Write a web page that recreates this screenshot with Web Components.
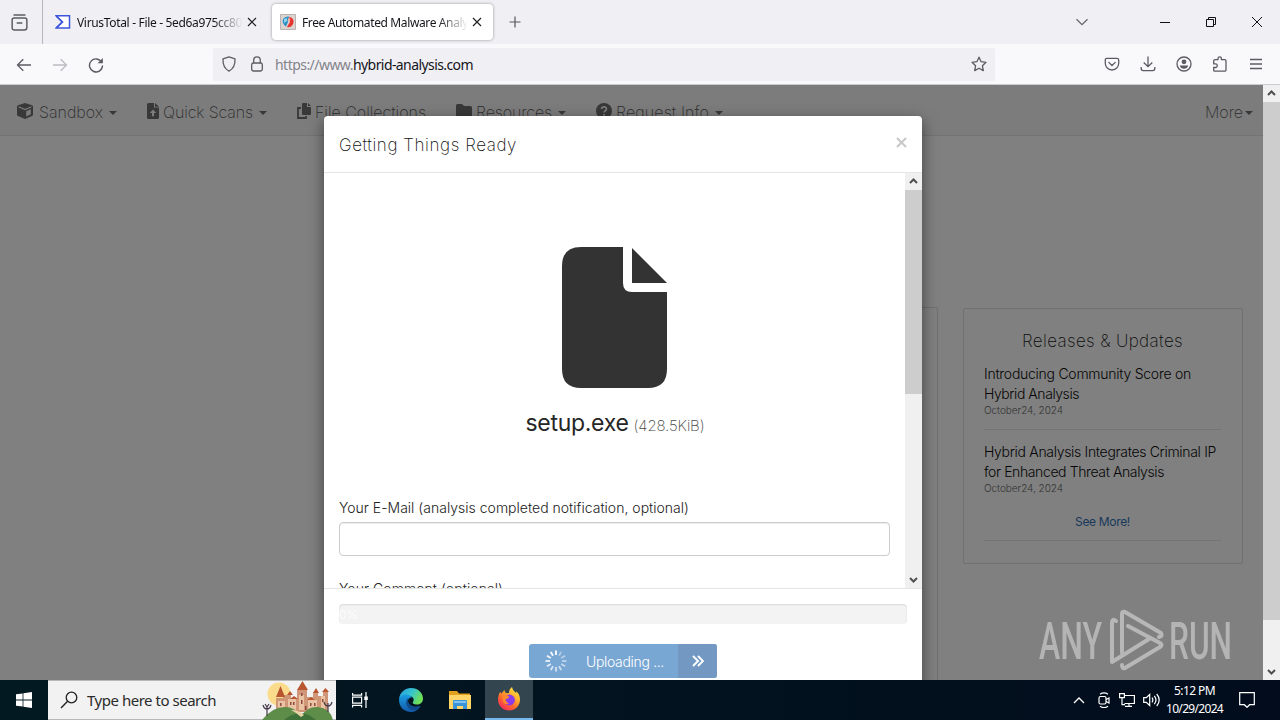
<!DOCTYPE html>
<html lang="en">
<head>
<meta charset="utf-8">
<title>Free Automated Malware Analysis Service</title>
<style>
    html, body { margin: 0; height: 100%; overflow: hidden; }
</style>
</head>
<body>
<app-desktop></app-desktop>

<script>
const ICONS = {
    recent: [20, 20, '<g fill="none" stroke="#5b5b63" stroke-width="1.4"><path d="M4.8 2.8h10.4" stroke-linecap="round"/><path d="M3 7.6Q3 5.8 5 5.8h10q2 0 2 1.8v7.2q0 2.4-2.4 2.4H5.4Q3 17.200 3 14.800z"/><path d="M7.800 10.500h4.400" stroke-linecap="round"/></g>'],
    vt: [16, 16, '<path d="M1.200 1.700h13.300v12.400H1.200l6.300-6.200z" fill="#fff" stroke="#3c55dc" stroke-width="1.500"/><path d="M1 2l6.300 6L1 14" fill="none" stroke="#3c55dc" stroke-width="1.500"/>'],
    hybrid: [16, 16, '<path fill="#dcd3d1" stroke="#b9b3b3" d="M.5.5h15v15H.5z"/><path fill="#2f8fc4" d="M3 5q2-3 6-2.500L8 8l-2 4.500Q1.500 10 3 5z"/><path fill="#e7332c" d="M9 3c4 0 5.500 4 4 7-1 2.500-4 4-6 3l3-5z"/><path fill="#8cd3ee" d="M4 5l3-1v3L4 9z"/><path fill="#f3b2a5" d="M8.500 4l2 1-1 3-2-1z"/>'],
    x: [16, 16, '<path d="M4 4l8 8M12 4l-8 8" stroke="#222" stroke-width="1.200" fill="none"/>'],
    plus: [16, 16, '<path d="M8 2.500v11M2.500 8h11" stroke="#55555c" stroke-width="1.200"/>'],
    chevron: [16, 16, '<path d="M2.500 5.200L8 10.700l5.500-5.500" fill="none" stroke="#66666d" stroke-width="1.300"/>'],
    min: [12, 12, '<path d="M1 6.500h10" stroke="#111" fill="none"/>'],
    restore: [12, 12, '<path d="M1.500 3.500h7v7h-7zM3.500 3.500v-2h7v7h-2" stroke="#111" fill="none"/>'],
    close: [12, 12, '<path d="M1 1l10 10M11 1L1 11" stroke="#111" fill="none"/>'],
    back: [16, 16, '<path d="M15 8H1.700M7.300 2.200L1.500 8l5.800 5.800" stroke="#5b5b63" stroke-width="1.300" fill="none"/>'],
    forward: [16, 16, '<path d="M1 8h13.300M8.700 2.200L14.500 8l-5.800 5.800" stroke="#bbbbc1" stroke-width="1.300" fill="none"/>'],
    reload: [16, 16, '<path d="M13.700 5.300A6.500 6.500 0 1 0 14.500 8.500" stroke="#5b5b63" stroke-width="1.400" fill="none"/><path d="M14.900 1v5.300H9.600z" fill="#5b5b63"/>'],
    shield: [16, 16, '<path d="M8 .9l6 2c.3 5.500-1.200 9.700-6 12.200C3.200 12.600 1.700 8.400 2 2.900z" stroke="#5b5b63" stroke-width="1.300" fill="none" stroke-linejoin="round"/>'],
    lock: [16, 16, '<rect x="2.700" y="7" width="10.600" height="8" rx="1.800" stroke="#5b5b63" stroke-width="1.300" fill="none"/><path d="M4.700 7V4.200a3.300 3.300 0 0 1 6.600 0V7" stroke="#5b5b63" stroke-width="1.300" fill="none"/>'],
    star: [16, 16, '<path d="M8 1.200l2.100 4.500 4.900.6-3.600 3.400.9 4.900L8 12.200l-4.300 2.400.9-4.900L1 6.300l4.900-.6z" stroke="#5b5b63" stroke-width="1.300" fill="none" stroke-linejoin="round"/>'],
    pocket: [16, 16, '<path d="M3 2.300h10q1.700 0 1.700 1.700v3.300a6.700 6.700 0 0 1-13.400 0V4Q1.300 2.300 3 2.300zM4.800 6.400L8 9.500l3.200-3.100" stroke="#5b5b63" stroke-width="1.300" fill="none" stroke-linecap="round"/>'],
    download: [16, 16, '<path d="M8 .5v10M3.700 6.500L8 10.700l4.300-4.200M1.200 11v1.600q0 2 2 2h9.600q2 0 2-2V11" stroke="#5b5b63" stroke-width="1.300" fill="none"/>'],
    account: [16, 16, '<circle cx="8" cy="8" r="7" stroke="#5b5b63" stroke-width="1.300" fill="none"/><circle cx="8" cy="5.800" r="2.400" fill="#5b5b63"/><path d="M3.800 9.500h8.400c-.3 2-2 3.300-4.200 3.300s-3.900-1.300-4.200-3.300z" fill="#5b5b63"/>'],
    puzzle: [16, 16, '<path d="M1.700 5q0-1.300 1.300-1.300h3V2.500a1.700 1.700 0 0 1 3.400 0v1.200h3.300Q14 3.700 14 5v9q0 1.200-1.300 1.200H3q-1.300 0-1.300-1.200v-2.500H3.500a1.800 1.800 0 0 0 0-3.600H1.700z" stroke="#5b5b63" stroke-width="1.300" fill="none" stroke-linejoin="round"/>'],
    menu: [16, 16, '<path d="M2 3.500h12M2 8h12M2 12.500h12" stroke="#5b5b63" stroke-width="1.300"/>'],
    cube: [16, 16, '<path fill="#383838" d="M8 0l7 2.200q1 .4 1 1.300v8.200q0 1-1 1.400L8 16l-7-2.900q-1-.4-1-1.400V3.500q0-.9 1-1.300z"/><path d="M1.500 3.800L8 6.500l6.500-2.700" stroke="#7c7c7c" stroke-width="1.200" fill="none"/><path d="M9.200 8.200l4.600-2v5l-4.600 2.300z" fill="#7c7c7c"/>'],
    upload: [12, 16, '<path fill="#383838" d="M1.500 0H7v4.500h5v10q0 1.500-1.500 1.500h-9Q0 16 0 14.500v-13Q0 0 1.500 0zM8 0l4 3.700H8z"/><path fill="#7c7c7c" d="M6 6.500l3.200 3.500H7v3.300H5V10H2.800z"/>'],
    copy: [14, 16, '<path fill="#383838" d="M6 0h4v4h4v7q0 1-1 1H6q-1 0-1-1V1q0-1 1-1zM11 0l3 3h-3z"/><path fill="none" stroke="#383838" stroke-width="1.800" d="M4 5H1v10h8v-2"/>'],
    folder: [16, 14, '<path fill="#383838" d="M1.500 0H6l2 2h6.500Q16 2 16 3.500v9q0 1.500-1.500 1.500h-13Q0 14 0 12.500v-11Q0 0 1.500 0z"/>'],
    question: [16, 16, '<circle cx="8" cy="8" r="8" fill="#383838"/><path d="M5.500 6q.3-2.200 2.500-2.200T10.500 6c0 1.700-2.400 1.700-2.400 3.400M8.100 11v1.800" fill="none" stroke="#7c7c7c" stroke-width="1.700"/>'],
    caret: [8, 4, '<path fill="#383838" d="M0 0h8L4 4z"/>'],
    up: [9, 6, '<path d="M1 5l3.500-3.500L8 5" fill="none" stroke="#505050" stroke-width="2"/>'],
    down: [9, 6, '<path d="M1 1l3.500 3.500L8 1" fill="none" stroke="#505050" stroke-width="2"/>'],
    times: [11, 11, '<path d="M1 1l9 9M10 1l-9 9" stroke="#c8c8c8" stroke-width="2.100"/>'],
    file: [105, 141, '<path fill="#333" d="M19 0h42v36q0 9 9 9h35v77q0 19-19 19H19Q0 141 0 122V19Q0 0 19 0zM70 1l35 35H70z"/>'],
    raquo: [12, 12, '<path d="M1 1l5 5-5 5M6 1l5 5-5 5" fill="none" stroke="#fff" stroke-width="1.900"/>'],
    windows: [16, 16, '<path fill="#fff" d="M0 2.300l6.600-.9v6.200H0zM7.400 1.300L16 0v7.600H7.400zM0 8.400h6.600v6.200L0 13.700zM7.400 8.400H16V16l-8.600-1.200z"/>'],
    search: [18, 18, '<circle cx="11.500" cy="6.500" r="5.300" fill="none" stroke="#222" stroke-width="1.300"/><path d="M7.600 10.300L1 17" stroke="#222" stroke-width="1.400"/>'],
    taskview: [18, 16, '<g fill="none" stroke="#fff" stroke-width="1.200"><path d="M1.600 1v2.200h9V1M1.600 15.500v-2.200h9v2.200M1.600 5.200h9v6h-9zM15 0v16"/></g><path fill="#fff" d="M13.300 4.500h3.500V8h-3.500z"/>'],
    edge: [24, 24, '<defs><linearGradient id="a" x1="0" y1="0" x2="1" y2=".4"><stop stop-color="#249bdf"/><stop offset=".55" stop-color="#36c4d0"/><stop offset="1" stop-color="#6ddf58"/></linearGradient><linearGradient id="b" x2="0" y2="1"><stop stop-color="#1b9de2"/><stop offset="1" stop-color="#1459a8"/></linearGradient></defs><path fill="url(#a)" d="M0 11C1 4 6 0 12 0c7 0 12 5 12 10.500 0 4-3 6-6 6s-5-1-4-2.500c2-3-.5-6-4-6C5 8 1 9 0 11z"/><path fill="url(#b)" d="M0 12c0-3 3-5.500 7-5.500 3 0 5.500 1.500 6 3-2-.5-4 1-4 3.500 0 4 5 7.500 12.500 5C19 22 16 24 12 24 5 24 0 19 0 12z"/><path fill="#114a8b" d="M9 10c-2 2-2.500 5-1 8 2 4 7 5 10 3.500 1.500-.8 3-2 3.500-3.500-6 2-12 0-12.500-5 0-1 0-2 0-3z"/>'],
    explorer: [22, 18, '<path fill="#e3a21d" d="M0 0h8l2 2.500h11V16H0z"/><path fill="#ffd667" d="M0 4h22v14H0z"/><path fill="#3b94d9" d="M4 10q0-1 1-1h12q1 0 1 1v8h-4v-3H8v3H4z"/><path fill="#80c4f2" d="M5 10h12v2H5z"/>'],
    firefox: [24, 24, '<defs><linearGradient id="f" x1=".9" y1="0" x2=".2" y2="1"><stop stop-color="#fff04a"/><stop offset=".35" stop-color="#ffb52c"/><stop offset=".65" stop-color="#ff6a2d"/><stop offset="1" stop-color="#f4245e"/></linearGradient></defs><path fill="url(#f)" d="M3 5l1.800 1.600Q6 4 7.500 3q0 2.300 2 3.300L12 6q0-4 3-6 .5 3 3 5l1.600 1.300L19 4q4 3.500 4 8.500C23 19 18 23.500 12 23.500S1 19 1 12.500C1 9 2 7 3 5z"/><circle cx="12.500" cy="13" r="5.400" fill="#8b3bea"/><path fill="#ff8a2d" d="M5.500 8.500q4-1.500 7 1.500-1.500 2-4 2 .5 3.500 3.500 4.500-4 1.500-6-1.500z"/>'],
    tray: [12, 7, '<path d="M1 6l5-5 5 5" fill="none" stroke="#fff" stroke-width="1.300"/>'],
    meet: [12, 16, '<g fill="none" stroke="#fff" stroke-width="1.200"><rect x="1" y="4.500" width="7" height="7.500" rx="1.500"/><path d="M8 7.500l3-1.500v5l-3-1.500M2 2.200Q6-.4 10 2.200M2 14.300q4 2.600 8 0"/></g>'],
    net: [16, 14, '<path fill="none" stroke="#fff" stroke-width="1.200" d="M5 2.500h10.400v8H5.500M10 10.500v3M6 13.400h7M.6.6h4.800v4H.6zM3 4.600v7h3"/>'],
    volume: [17, 14, '<g fill="none" stroke="#fff" stroke-width="1.200"><path d="M.7 4.700h2.600L6.700 1.500v11L3.300 9.300H.7z"/><path d="M9 4.700q1.700 2.300 0 4.600M11.300 2.800q3.400 4.200 0 8.400M13.700 1q5 6 0 12"/></g>'],
    note: [16, 16, '<path fill="none" stroke="#fff" stroke-width="1.200" d="M.7.700h14.600v12h-4.600L8 15.300l-2.700-2.600H.7z"/>']
};

class UiIcon extends HTMLElement {
    connectedCallback() {
        const [w, h, body] = ICONS[this.getAttribute('name')];
        const width = this.getAttribute('size') || w;
        this.attachShadow({ mode: 'open' }).innerHTML = `
            <style>
                :host { display: block; flex: none; line-height: 0; }
                svg { display: block; }
            </style>
            <svg width="${width}" height="${width * h / w}" viewBox="0 0 ${w} ${h}">${body}</svg>
        `;
    }
}

// One line of text, tracked so that it fills the width given in `w`
class FitText extends HTMLElement {
    connectedCallback() {
        this.attachShadow({ mode: 'open' }).innerHTML = `
            <style>
                :host { display: block; flex: none; width: max-content; white-space: nowrap; }
            </style>
            <slot></slot>
        `;
        const target = Number(this.getAttribute('w'));
        const natural = this.getBoundingClientRect().width;
        this.style.letterSpacing = (target - natural) / this.textContent.length + 'px';
    }
}

class BrowserTab extends HTMLElement {
    connectedCallback() {
        this.attachShadow({ mode: 'open' }).innerHTML = `
            <style>
                :host { display: flex; align-items: center; box-sizing: border-box; width: 221px; height: 36px; padding: 0 8px; border-radius: 4px; }
                :host([active]) { background: #fff; box-shadow: 0 0 3px rgba(0, 0, 0, .4); }
                .title { width: 166px; margin: 1px 1px 0 6px; overflow: hidden; -webkit-mask-image: linear-gradient(90deg, #000 82%, transparent); mask-image: linear-gradient(90deg, #000 82%, transparent); }
            </style>
            <ui-icon name="${this.getAttribute('icon')}"></ui-icon>
            <div class="title"><slot></slot></div>
            <ui-icon name="x"></ui-icon>
        `;
    }
}

class TabStrip extends HTMLElement {
    connectedCallback() {
        this.attachShadow({ mode: 'open' }).innerHTML = `
            <style>
                :host { display: flex; align-items: center; height: 44px; background: #f0f0f4; font: 12px/20px "Noto Sans", sans-serif; color: #15141a; }
                .recent { display: flex; align-items: center; box-sizing: border-box; width: 43px; height: 44px; padding-left: 9px; border-right: 1px solid #b5b5ba; }
                browser-tab { margin-left: 4px; }
                .controls { display: flex; align-items: center; margin-left: auto; padding-right: 17px; gap: 34px; }
                .controls ui-icon:first-child { margin-right: 35px; }
            </style>
            <div class="recent"><ui-icon name="recent" size="21"></ui-icon></div>
            <browser-tab icon="vt"><fit-text w="165">VirusTotal - File - 5ed6a975cc80</fit-text></browser-tab>
            <browser-tab icon="hybrid" active><fit-text w="166">Free Automated Malware Analy</fit-text></browser-tab>
            <ui-icon name="plus" style="margin-left: 14px"></ui-icon>
            <div class="controls">
                <ui-icon name="chevron"></ui-icon>
                <ui-icon name="min"></ui-icon>
                <ui-icon name="restore"></ui-icon>
                <ui-icon name="close"></ui-icon>
            </div>
        `;
    }
}

class NavToolbar extends HTMLElement {
    connectedCallback() {
        this.attachShadow({ mode: 'open' }).innerHTML = `
            <style>
                :host { display: flex; align-items: center; box-sizing: border-box; height: 41px; padding-left: 16px; background: #f9f9fb; border-bottom: 1px solid #ccccd0; }
                .nav { display: flex; gap: 20px; padding-top: 1px; }
                .url { display: flex; align-items: center; box-sizing: border-box; width: 782px; height: 33px; margin-left: 109px; padding: 0 8px; border-radius: 2px; background: #f0f0f4; font: 14px/20px "Noto Sans", sans-serif; color: #15141a; }
                .url ui-icon + ui-icon { margin: 0 10px 0 12px; }
                .url fit-text { padding-top: 2px; }
                .scheme { color: #84838a; }
                .url .star { margin-left: auto; }
                .actions { display: flex; gap: 20px; margin-left: 109px; }
            </style>
            <div class="nav">
                <ui-icon name="back"></ui-icon>
                <ui-icon name="forward"></ui-icon>
                <ui-icon name="reload"></ui-icon>
            </div>
            <div class="url">
                <ui-icon name="shield"></ui-icon>
                <ui-icon name="lock"></ui-icon>
                <fit-text w="78" class="scheme">https://www.</fit-text>
                <fit-text w="120">hybrid-analysis.com</fit-text>
                <ui-icon name="star" class="star"></ui-icon>
            </div>
            <div class="actions">
                <ui-icon name="pocket"></ui-icon>
                <ui-icon name="download"></ui-icon>
                <ui-icon name="account"></ui-icon>
                <ui-icon name="puzzle"></ui-icon>
                <ui-icon name="menu"></ui-icon>
            </div>
        `;
    }
}

class ScrollBar extends HTMLElement {
    connectedCallback() {
        this.attachShadow({ mode: 'open' }).innerHTML = `
            <style>
                :host { display: flex; flex-direction: column; align-items: center; flex: none; width: 17px; background: #f0f0f0; }
                .btn { display: flex; align-items: center; justify-content: center; box-sizing: border-box; height: 17px; padding-bottom: 1px; }
                .btn:last-child { padding-bottom: 0; }
                .thumb { width: 17px; height: ${this.getAttribute('thumb')}px; margin-bottom: auto; background: #cdcdcd; }
            </style>
            <div class="btn"><ui-icon name="up"></ui-icon></div>
            <div class="thumb"></div>
            <div class="btn"><ui-icon name="down"></ui-icon></div>
        `;
    }
}

class SiteNav extends HTMLElement {
    connectedCallback() {
        this.attachShadow({ mode: 'open' }).innerHTML = `
            <style>
                :host { display: flex; align-items: center; box-sizing: border-box; height: 51px; padding: 2px 10px 0 17px; background: #7c7c7c; border-bottom: 1px solid #737373; font: 200 16px/24px Inter, sans-serif; color: #2c2c2c; }
                .item { display: flex; align-items: center; margin-right: 30px; }
                .item fit-text { margin-left: 4px; padding-top: 1px; }
                .item ui-icon[name="caret"] { margin: 4px 0 0 6px; }
                .more { margin: 0 0 0 auto; }
                .more ui-icon[name="caret"] { margin-left: 2px; }
            </style>
            <div class="item"><ui-icon name="cube"></ui-icon><fit-text w="64" style="margin-left: 6px">Sandbox</fit-text><ui-icon name="caret"></ui-icon></div>
            <div class="item"><ui-icon name="upload"></ui-icon><fit-text w="90">Quick Scans</fit-text><ui-icon name="caret"></ui-icon></div>
            <div class="item"><ui-icon name="copy"></ui-icon><fit-text w="111">File Collections</fit-text></div>
            <div class="item"><ui-icon name="folder"></ui-icon><fit-text w="76">Resources</fit-text><ui-icon name="caret"></ui-icon></div>
            <div class="item"><ui-icon name="question"></ui-icon><fit-text w="93">Request Info</fit-text><ui-icon name="caret"></ui-icon></div>
            <div class="item more"><fit-text w="38">More</fit-text><ui-icon name="caret"></ui-icon></div>
        `;
    }
}

class NewsItem extends HTMLElement {
    connectedCallback() {
        this.attachShadow({ mode: 'open' }).innerHTML = `
            <style>
                :host { display: block; box-sizing: border-box; height: 70px; padding-top: 4px; margin-bottom: 8px; border-bottom: 1px solid #747474; font: 300 14px/19.5px Inter, sans-serif; color: #060606; }
                .date { font-size: 10px; line-height: 14px; color: #333; }
            </style>
            <slot></slot>
            <fit-text class="date" w="79">October24, 2024</fit-text>
        `;
    }
}

class NewsPanel extends HTMLElement {
    connectedCallback() {
        this.attachShadow({ mode: 'open' }).innerHTML = `
            <style>
                :host { display: flex; flex-direction: column; box-sizing: border-box; width: 280px; height: 256px; padding: 21px 21px 0 20px; border: 1px solid #707070; border-radius: 2px; font-family: Inter, sans-serif; }
                .heading { align-self: center; margin-bottom: 8px; font: 200 17px/22px Inter, sans-serif; color: #0c0c0c; }
                .more { display: flex; justify-content: center; box-sizing: border-box; height: 29px; margin-top: -4px; border-bottom: 1px solid #747474; font: 400 12px/19px Inter, sans-serif; color: #17385a; }
                news-item:nth-of-type(2) { border-color: transparent; }
            </style>
            <fit-text class="heading" w="161">Releases &amp; Updates</fit-text>
            <news-item>
                <fit-text w="207">Introducing Community Score on</fit-text>
                <fit-text w="95">Hybrid Analysis</fit-text>
            </news-item>
            <news-item>
                <fit-text w="232">Hybrid Analysis Integrates Criminal IP</fit-text>
                <fit-text w="180">for Enhanced Threat Analysis</fit-text>
            </news-item>
            <div class="more"><fit-text w="55">See More!</fit-text></div>
        `;
    }
}

class UploadDialog extends HTMLElement {
    connectedCallback() {
        this.attachShadow({ mode: 'open' }).innerHTML = `
            <style>
                :host { display: flex; flex-direction: column; width: 598px; height: 600px; border-radius: 4px; background: #fff; box-shadow: 0 5px 15px rgba(0, 0, 0, .5); font: 400 14px/20px Inter, sans-serif; color: #333; }
                header { display: flex; justify-content: space-between; box-sizing: border-box; height: 57px; padding: 17px 15px 0; border-bottom: 1px solid #e5e5e5; font-size: 17px; font-weight: 200; line-height: 24px; color: #111; }
                header ui-icon { margin-top: 4px; }
                .body { display: flex; height: 415px; }
                .content { display: flex; flex-direction: column; box-sizing: border-box; width: 581px; padding: 74px 15px 0; overflow: hidden; }
                .content > * { flex: none; }
                .content > ui-icon { align-self: center; }
                .name { display: flex; align-items: baseline; justify-content: center; gap: 5px; height: 110px; padding-left: 1px; font-size: 23px; line-height: 70px; color: #262626; }
                .size { font-size: 15px; font-weight: 200; color: #444; }
                label { display: block; font-weight: 300; color: #222; }
                input { box-sizing: border-box; width: 551px; height: 34px; margin: 4px 0 23px; border: 1px solid #ccc; border-radius: 4px; background: #fff; box-shadow: inset 0 1px 1px rgba(0, 0, 0, .075); }
                footer { display: flex; flex-direction: column; align-items: center; padding-top: 15px; border-top: 1px solid #e5e5e5; }
                .progress { box-sizing: border-box; width: 568px; height: 20px; border-radius: 4px; background: #f3f3f3; box-shadow: inset 0 1px 2px rgba(0, 0, 0, .1); font-size: 12px; font-weight: 300; line-height: 21px; color: #fff; }
                .button { display: flex; align-items: center; box-sizing: border-box; width: 188px; height: 34px; margin-top: 20px; padding-left: 16px; border-radius: 3px; background: #79a7d4; color: #fff; font-weight: 300; overflow: hidden; }
                .button fit-text { padding-top: 2px; }
                .spinner { width: 22px; height: 22px; margin-right: 19px; }
                .next { display: flex; align-items: center; justify-content: center; width: 39px; height: 34px; margin-left: auto; background: #7399c3; }
            </style>
            <header><fit-text w="178">Getting Things Ready</fit-text><ui-icon name="times"></ui-icon></header>
            <div class="body">
                <div class="content">
                    <ui-icon name="file"></ui-icon>
                    <div class="name"><fit-text w="103">setup.exe</fit-text><fit-text class="size" w="71">(428.5KiB)</fit-text></div>
                    <label><fit-text w="350">Your E-Mail (analysis completed notification, optional)</fit-text></label>
                    <input type="text">
                    <label><fit-text w="164">Your Comment (optional)</fit-text></label>
                </div>
                <scroll-bar thumb="204"></scroll-bar>
            </div>
            <footer>
                <div class="progress">0%</div>
                <div class="button">
                    <svg class="spinner" viewBox="-11 -11 22 22"></svg>
                    <fit-text w="78">Uploading ...</fit-text>
                    <div class="next"><ui-icon name="raquo"></ui-icon></div>
                </div>
            </footer>
        `;
        let spokes = '';
        for (let i = 0; i < 12; i++) {
            spokes += `<path d="M0-6v-4.500" stroke="#fff" stroke-width="1.800" opacity="${1 - i * 0.055}" transform="rotate(${-i * 30})"/>`;
        }
        this.shadowRoot.querySelector('.spinner').innerHTML = spokes;
    }
}

class AnyrunMark extends HTMLElement {
    connectedCallback() {
        this.attachShadow({ mode: 'open' }).innerHTML = `
            <style>
                :host { display: block; opacity: .75; }
                svg { display: block; overflow: visible; }
                text { font: 500 51px Roboto, sans-serif; fill: #c6c6c6; }
            </style>
            <svg width="200" height="68" viewBox="0 0 200 68">
                <text x="1" y="51" textLength="63" lengthAdjust="spacingAndGlyphs">ANY</text>
                <text x="131" y="51" textLength="63" lengthAdjust="spacingAndGlyphs">RUN</text>
                <g fill="none" stroke="#cacaca" stroke-width="4" stroke-linecap="round" stroke-linejoin="round">
                    <path d="M78 13q-4-3-4 2v39l37-23"/>
                    <path d="M84 45V6q0-3 3-2l36 21q2 3-2 4"/>
                    <path d="M90 18l32 17q3 2 0 4L87 60q-3 1-3-3"/>
                </g>
            </svg>
        `;
    }
}

class WebPage extends HTMLElement {
    connectedCallback() {
        this.attachShadow({ mode: 'open' }).innerHTML = `
            <style>
                :host { display: flex; position: relative; flex: 1; min-height: 0; overflow: hidden; }
                .page { flex: 1; background: #808080; }
                .columns { display: flex; gap: 25px; padding-top: 171px; margin-left: 340px; }
                .main { box-sizing: border-box; width: 598px; height: 400px; border: 1px solid #707070; border-radius: 2px; }
                news-panel { margin-top: 1px; }
                upload-dialog { position: absolute; left: 324px; top: 31px; }
                anyrun-mark { position: absolute; left: 1038px; top: 523px; }
            </style>
            <div class="page">
                <site-nav></site-nav>
                <div class="columns">
                    <div class="main"></div>
                    <news-panel></news-panel>
                </div>
            </div>
            <scroll-bar thumb="518"></scroll-bar>
            <upload-dialog></upload-dialog>
            <anyrun-mark></anyrun-mark>
        `;
    }
}

class SearchCastle extends HTMLElement {
    connectedCallback() {
        this.attachShadow({ mode: 'open' }).innerHTML = `
            <style>
                :host { display: block; margin-left: auto; }
                svg { display: block; }
            </style>
            <svg width="74" height="39" viewBox="0 0 74 39">
                <circle cx="17" cy="13" r="11.500" fill="#fbdc8c"/>
                <path fill="#cf9677" d="M14 17h7v-3h8v3h6V9h10v7h6v-5h5v4h5v-5h5v21H14z"/>
                <path fill="#e9c3a4" d="M16 20h7v10h-7zM26 18h8v12h-8zM37 14h5v15h-5zM46 19h9v11h-9zM59 15h4v13h-4z"/>
                <path fill="#b9552f" d="M14 16l4.500-11L23 16zM35 9l5.500-9L46 9zM51 12l3-5 3 5zM60 11l3.500-4 3.500 4zM25 14l3-4 3 4zM28 18l4-3 4 3zM45 19l4-3 4 3z"/>
                <path fill="#8a4b3e" d="M18 22h1.500v3H18zM28 21h1.500v3H28zM31 21h1.500v3H31zM39 12h1.500v3H39zM39 19h1.500v4H39zM48 22h1.500v3H48zM52 22h1.500v3H52zM60 18h1.500v3H60zM22 26h1.500v3H22zM43 25h1.500v4H43z"/>
                <path fill="#5d8d48" d="M0 39q10-13 23-13 10 0 16 9 7-10 17-9 12 1 15 13z"/>
                <path fill="#3f7239" d="M22 39q12-10 25-5l7 5z"/>
                <path fill="#e8d3a6" d="M29 29q8 0 13 5l-3 2q-4-4-10-7z"/>
                <path stroke="#463a4c" stroke-width="1.200" fill="none" d="M5 35V25M1 24q1 4 4 4t4-4M3 23l2 3 2-3M66 31V22M62 21q1 4 4 4t4-4"/>
            </svg>
        `;
    }
}

class TaskBar extends HTMLElement {
    connectedCallback() {
        this.attachShadow({ mode: 'open' }).innerHTML = `
            <style>
                :host { display: flex; align-items: center; height: 40px; background: linear-gradient(90deg, #021922, #02131f 50%, #020c1c); font: 12px/18px "Noto Sans", sans-serif; color: #fff; }
                .start { display: flex; align-items: center; justify-content: center; width: 48px; height: 40px; }
                .search { display: flex; align-items: center; box-sizing: border-box; width: 288px; height: 40px; padding-left: 12px; border: solid #b8b8b8; border-width: 1px 0; background: #f2f2f2; font-size: 15px; line-height: 20px; color: #2b2b2b; }
                .search fit-text { margin-left: 9px; }
                .app { display: flex; align-items: center; justify-content: center; box-sizing: border-box; width: 48px; height: 40px; }
                .app.active { background: #334650; border-bottom: 2px solid #76b9ed; }
                .tray { display: flex; align-items: center; margin-left: auto; padding-right: 25px; }
                .clock { display: flex; flex-direction: column; align-items: center; margin: 0 16px 0 6px; }
            </style>
            <div class="start"><ui-icon name="windows"></ui-icon></div>
            <div class="search">
                <ui-icon name="search"></ui-icon>
                <fit-text w="129">Type here to search</fit-text>
                <search-castle></search-castle>
            </div>
            <div class="app"><ui-icon name="taskview"></ui-icon></div>
            <div class="app" style="width: 53px"><ui-icon name="edge"></ui-icon></div>
            <div class="app" style="padding-right: 2px"><ui-icon name="explorer"></ui-icon></div>
            <div class="app active"><ui-icon name="firefox"></ui-icon></div>
            <div class="tray">
                <ui-icon name="tray"></ui-icon>
                <ui-icon name="meet" style="margin-left: 13px"></ui-icon>
                <ui-icon name="net" style="margin-left: 9px"></ui-icon>
                <ui-icon name="volume" style="margin-left: 8px"></ui-icon>
                <div class="clock"><fit-text w="41">5:12 PM</fit-text><fit-text w="57">10/29/2024</fit-text></div>
                <ui-icon name="note"></ui-icon>
            </div>
        `;
    }
}

class AppDesktop extends HTMLElement {
    connectedCallback() {
        this.attachShadow({ mode: 'open' }).innerHTML = `
            <style>
                :host { display: flex; flex-direction: column; width: 1280px; height: 720px; overflow: hidden; }
            </style>
            <tab-strip></tab-strip>
            <nav-toolbar></nav-toolbar>
            <web-page></web-page>
            <task-bar></task-bar>
        `;
    }
}

customElements.define('app-desktop', AppDesktop);
customElements.define('tab-strip', TabStrip);
customElements.define('browser-tab', BrowserTab);
customElements.define('nav-toolbar', NavToolbar);
customElements.define('web-page', WebPage);
customElements.define('site-nav', SiteNav);
customElements.define('news-panel', NewsPanel);
customElements.define('news-item', NewsItem);
customElements.define('upload-dialog', UploadDialog);
customElements.define('anyrun-mark', AnyrunMark);
customElements.define('scroll-bar', ScrollBar);
customElements.define('task-bar', TaskBar);
customElements.define('search-castle', SearchCastle);
customElements.define('ui-icon', UiIcon);
// Last, so the text is measured with its final font
customElements.define('fit-text', FitText);
</script>
</body>
</html>
